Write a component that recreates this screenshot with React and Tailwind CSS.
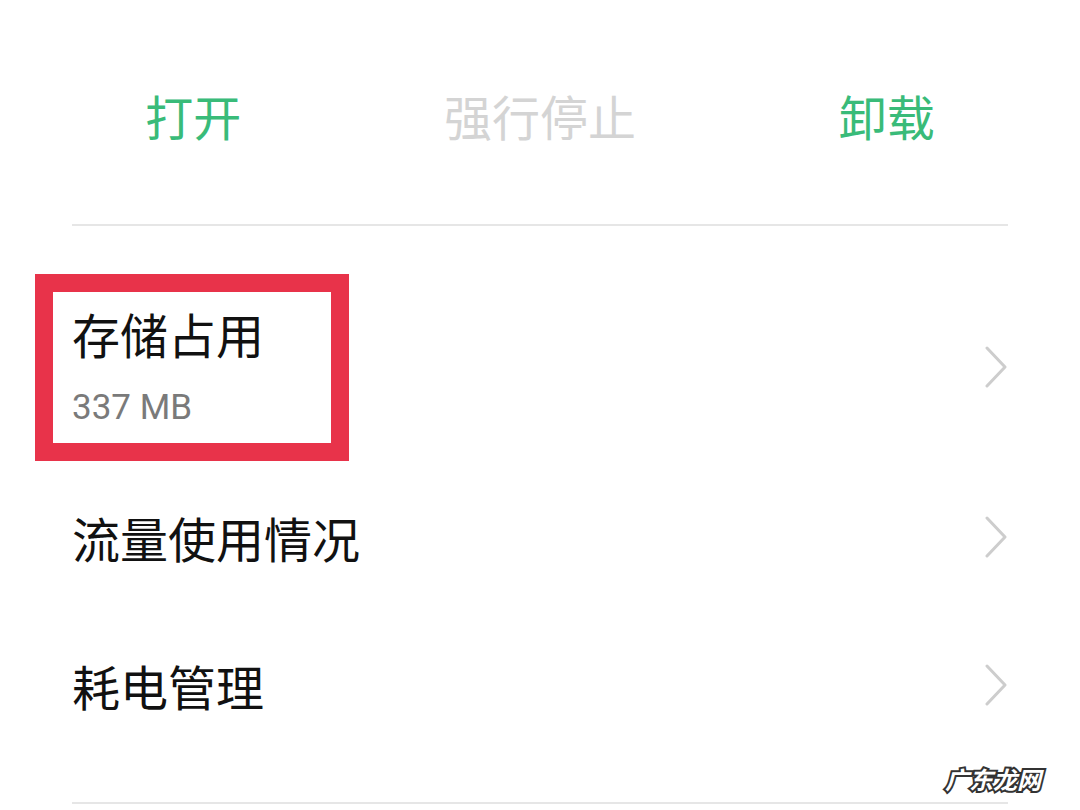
// App.jsx
// App info screen: action buttons and settings list with an annotation box

import React from 'react';

const font = "font-['Noto_Sans_CJK_SC','Noto_Sans',sans-serif]";

function Chevron() {
  return (
    <svg width="24" height="42" viewBox="0 0 24 42" className="shrink-0">
      <polyline
        points="3,2 21,21 3,40"
        fill="none"
        stroke="#cdcdcd"
        strokeWidth="3"
        strokeLinecap="round"
        strokeLinejoin="round"
      />
    </svg>
  );
}

function Row({ title, sub, className }) {
  return (
    <div className={`flex items-center justify-between ${className}`}>
      <div className="flex flex-col">
        <span className="text-[48px] leading-none text-[#111]">{title}</span>
        {sub && (
          <span className="mt-[33px] text-[35px] leading-none text-[#7a7a7a] font-['Roboto','Noto_Sans',sans-serif]">
            {sub}
          </span>
        )}
      </div>
      <Chevron />
    </div>
  );
}

export default function App() {
  return (
    <div className={`relative w-[1080px] h-[810px] overflow-hidden bg-white ${font}`}>
      {/* Actions */}
      <div className="grid grid-cols-3 px-[20px] pt-[91px] h-[224px] text-[48px] leading-none text-center">
        <span className="text-[#39bb79]">打开</span>
        <span className="text-[#d4d4d4]">强行停止</span>
        <span className="text-[#39bb79]">卸载</span>
      </div>
      <div className="mx-[72px] h-[2px] bg-[#e6e6e6]" />

      {/* Settings list */}
      <div className="pl-[72px] pr-[72px]">
        <Row title="存储占用" sub="337 MB" className="pt-[25px] h-[256px]" />
        <Row title="流量使用情况" className="h-[110px]" />
        <Row title="耗电管理" className="mt-[38px] h-[110px]" />
      </div>
      <div className="absolute left-[72px] right-[72px] top-[802px] h-[2px] bg-[#e6e6e6]" />

      {/* Annotation */}
      <div className="absolute left-[35px] top-[274px] w-[314px] h-[187px] border-[18px] border-[#e8334a]" />

      {/* Watermark */}
      <div className="absolute left-[945px] top-[767px] text-[24px] leading-none font-bold italic text-white [-webkit-text-stroke:4px_#333] [paint-order:stroke_fill]">
        广东龙网
      </div>
    </div>
  );
}
